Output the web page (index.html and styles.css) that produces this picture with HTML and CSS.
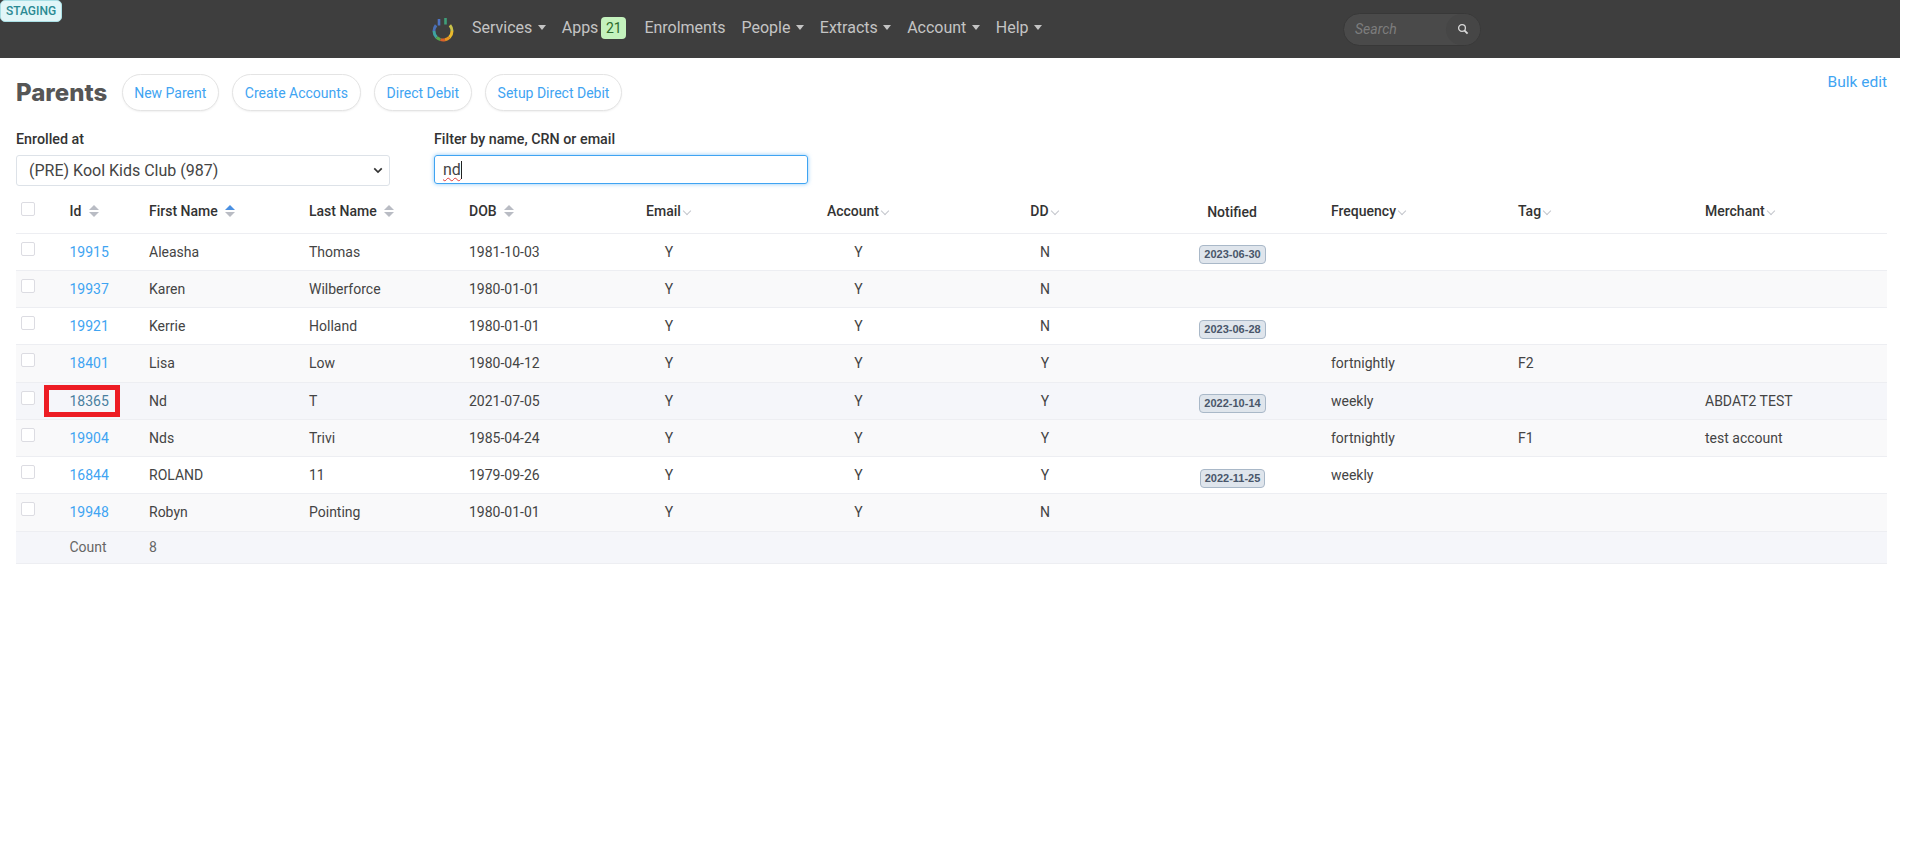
FILE: index.html
```html
<!DOCTYPE html>
<html lang="en">
<head>
<meta charset="utf-8">
<title>Parents</title>
<link rel="stylesheet" href="styles.css">
</head>
<body>
<span class="staging">STAGING</span>
<header class="topbar">
  <svg class="logo" viewBox="0 0 22 25" width="22" height="25" fill="none" stroke-width="3">
    <path d="M4.1 8.2 A9 9 0 0 0 2 14" stroke="#4a6fb5"/>
    <path d="M2 14 A9 9 0 0 0 4.6 20.4" stroke="#3fa3a0"/>
    <path d="M4.6 20.4 A9 9 0 0 0 8.5 22.6" stroke="#5aa84f"/>
    <path d="M8.5 22.6 A9 9 0 0 0 13 22.8" stroke="#d9622b"/>
    <path d="M13 22.8 A9 9 0 0 0 17.4 20.4" stroke="#e8951f"/>
    <path d="M17.4 20.4 A9 9 0 0 0 20 14" stroke="#e9b92c"/>
    <path d="M20 14 A9 9 0 0 0 17.9 8.2" stroke="#c9c24a"/>
    <path d="M7 2 V8.5" stroke="#4f74c4" stroke-width="2.6"/>
    <path d="M13.5 1 V7.5" stroke="#3f9f7a" stroke-width="2.6"/>
  </svg>
  <nav class="menu">
    <a class="menu-item caret">Services</a>
    <a class="menu-item apps">Apps<span class="count">21</span></a>
    <a class="menu-item">Enrolments</a>
    <a class="menu-item caret">People</a>
    <a class="menu-item caret">Extracts</a>
    <a class="menu-item caret">Account</a>
    <a class="menu-item caret">Help</a>
  </nav>
  <div class="search">
    <span class="search-text">Search</span>
    <span class="search-btn">
      <svg viewBox="0 0 12 12" width="12" height="12" fill="none" stroke="#d8d8d8"><circle cx="5" cy="5" r="3.4" stroke-width="1.3"/><path d="M7.6 7.6 L10.6 10.6" stroke-width="1.8"/></svg>
    </span>
  </div>
</header>
<main class="content">
  <div class="title-row">
    <h1>Parents</h1>
    <a class="pill">New Parent</a>
    <a class="pill">Create Accounts</a>
    <a class="pill">Direct Debit</a>
    <a class="pill">Setup Direct Debit</a>
    <a class="bulk">Bulk edit</a>
  </div>
  <div class="filters">
    <div class="field">
      <label>Enrolled at</label>
      <div class="select">(PRE) Kool Kids Club (987)
        <svg viewBox="0 0 12 8" width="10" height="7" fill="none" stroke="#333" stroke-width="2"><path d="M1.5 1.5 L6 6 L10.5 1.5"/></svg>
      </div>
    </div>
    <div class="field">
      <label>Filter by name, CRN or email</label>
      <div class="input"><span class="typed">nd</span><span class="cursor"></span></div>
    </div>
  </div>
  <table>
    <colgroup>
      <col class="c-check"><col class="c-id"><col class="c-name"><col class="c-name"><col class="c-dob">
      <col class="c-192"><col class="c-187"><col class="c-186"><col class="c-183"><col class="c-187"><col class="c-187"><col class="c-192">
    </colgroup>
    <thead>
      <tr>
        <th><span class="box"></span></th>
        <th>Id<i class="sort"></i></th>
        <th>First Name<i class="sort asc"></i></th>
        <th>Last Name<i class="sort"></i></th>
        <th>DOB<i class="sort"></i></th>
        <th class="mid">Email<i class="chev"></i></th>
        <th class="mid">Account<i class="chev"></i></th>
        <th class="mid">DD<i class="chev"></i></th>
        <th class="mid">Notified</th>
        <th>Frequency<i class="chev"></i></th>
        <th>Tag<i class="chev"></i></th>
        <th>Merchant<i class="chev"></i></th>
      </tr>
    </thead>
    <tbody>
      <tr><td><span class="box"></span></td><td><a class="link">19915</a></td><td>Aleasha</td><td>Thomas</td><td>1981-10-03</td><td class="mid">Y</td><td class="mid">Y</td><td class="mid">N</td><td class="mid"><span class="date">2023-06-30</span></td><td></td><td></td><td></td></tr>
      <tr class="alt"><td><span class="box"></span></td><td><a class="link">19937</a></td><td>Karen</td><td>Wilberforce</td><td>1980-01-01</td><td class="mid">Y</td><td class="mid">Y</td><td class="mid">N</td><td class="mid"></td><td></td><td></td><td></td></tr>
      <tr><td><span class="box"></span></td><td><a class="link">19921</a></td><td>Kerrie</td><td>Holland</td><td>1980-01-01</td><td class="mid">Y</td><td class="mid">Y</td><td class="mid">N</td><td class="mid"><span class="date">2023-06-28</span></td><td></td><td></td><td></td></tr>
      <tr class="alt"><td><span class="box"></span></td><td><a class="link">18401</a></td><td>Lisa</td><td>Low</td><td>1980-04-12</td><td class="mid">Y</td><td class="mid">Y</td><td class="mid">Y</td><td class="mid"></td><td>fortnightly</td><td>F2</td><td></td></tr>
      <tr class="hover"><td><span class="box"></span></td><td class="marked"><a class="link dim">18365</a><span class="redbox"></span></td><td>Nd</td><td>T</td><td>2021-07-05</td><td class="mid">Y</td><td class="mid">Y</td><td class="mid">Y</td><td class="mid"><span class="date">2022-10-14</span></td><td>weekly</td><td></td><td>ABDAT2 TEST</td></tr>
      <tr class="alt"><td><span class="box"></span></td><td><a class="link">19904</a></td><td>Nds</td><td>Trivi</td><td>1985-04-24</td><td class="mid">Y</td><td class="mid">Y</td><td class="mid">Y</td><td class="mid"></td><td>fortnightly</td><td>F1</td><td>test account</td></tr>
      <tr><td><span class="box"></span></td><td><a class="link">16844</a></td><td>ROLAND</td><td>11</td><td>1979-09-26</td><td class="mid">Y</td><td class="mid">Y</td><td class="mid">Y</td><td class="mid"><span class="date">2022-11-25</span></td><td>weekly</td><td></td><td></td></tr>
      <tr class="alt"><td><span class="box"></span></td><td><a class="link">19948</a></td><td>Robyn</td><td>Pointing</td><td>1980-01-01</td><td class="mid">Y</td><td class="mid">Y</td><td class="mid">N</td><td class="mid"></td><td></td><td></td><td></td></tr>
    </tbody>
    <tfoot>
      <tr><td></td><td>Count</td><td>8</td><td></td><td></td><td></td><td></td><td></td><td></td><td></td><td></td><td></td></tr>
    </tfoot>
  </table>
</main>
</body>
</html>
```
FILE: styles.css
```css
* { box-sizing: border-box; }
html, body { margin: 0; background: #fff; overflow: hidden; }
body { width: 1900px; height: 856px; font-family: Roboto, "Liberation Sans", sans-serif; font-size: 14px; color: #444; position: relative; }
.staging { position: absolute; left: 0; top: 0; width: 62px; height: 22px; background: #e1f6f8; border: 1px solid #a9dfe5; border-radius: 5px; color: #2b8a93; font-size: 12px; font-weight: 500; line-height: 20px; text-align: center; z-index: 2; }
.topbar { height: 58px; background: #3e3e3e; display: flex; align-items: center; padding-left: 432px; }
.logo { flex: none; margin-right: 18px; }
.menu { display: flex; gap: 16px; font-size: 16px; color: #c4c4c4; width: 871px; margin-bottom: 3px; }
.menu-item { display: inline-flex; align-items: center; white-space: nowrap; }
.caret::after { content: ""; margin-left: 5.4px; border: 4px solid transparent; border-top: 5px solid #c4c4c4; border-bottom: 0; }
.apps { gap: 3px; margin-right: 2px; }
.count { display: inline-block; width: 25px; height: 22px; background: #c4f2bd; border-radius: 4px; color: #2d6b2d; font-size: 14px; line-height: 22px; text-align: center; }
.search { width: 138px; height: 33px; border-radius: 17px; background: #4a4a4a; border: 1px solid #383838; display: flex; align-items: center; justify-content: space-between; padding-left: 11px; }
.search-text { color: #7d7d7d; font-style: italic; font-size: 14px; }
.search-btn { width: 34px; height: 31px; border-radius: 16px; background: #464646; display: flex; align-items: center; justify-content: center; }
.content { padding: 16px 13px 0 16px; }
.title-row { display: flex; align-items: center; height: 37px; gap: 13.5px; position: relative; }
h1 { margin: 0 1px 0 0; font-family: Inter, "Liberation Sans", sans-serif; font-size: 24px; font-weight: 800; color: #565656; }
.pill { height: 37px; padding: 0 11.5px; border: 1px solid #e4e4e4; border-radius: 19px; background: #fff; color: #3fa4f2; line-height: 37px; box-shadow: 0 1px 2px rgba(0,0,0,.06); white-space: nowrap; }
.bulk { position: absolute; right: 0; top: -2px; font-size: 15.5px; color: #3fa4f2; line-height: 20px; }
.filters { display: flex; gap: 44px; margin-top: 18px; }
.field { width: 374px; }
.field label { display: block; font-size: 14.3px; font-weight: 500; color: #333; line-height: 20px; margin-bottom: 6px; }
.select { height: 31px; border: 1px solid #dde2e8; border-radius: 3px; padding: 0 6px 0 12px; font-size: 16px; color: #444; line-height: 29px; display: flex; justify-content: space-between; align-items: center; }
.input { height: 29px; border: 1px solid #3fa4f2; border-radius: 3px; box-shadow: 0 0 4px rgba(63,164,242,.6); padding-left: 8px; font-size: 16px; color: #444; line-height: 27px; display: flex; align-items: center; }
.typed { text-decoration: underline wavy #e23b3b 1px; text-underline-offset: 2px; }
.cursor { width: 1px; height: 18px; background: #222; }
table { width: 100%; border-collapse: collapse; table-layout: fixed; }
.c-check { width: 43.5px; }
.c-id { width: 79.5px; }
.c-name { width: 160px; }
.c-dob { width: 114px; }
.c-192 { width: 192px; }
.c-187 { width: 187px; }
.c-186 { width: 186px; }
.c-183 { width: 183px; }
th, td { padding: 0 10px; text-align: left; vertical-align: middle; white-space: nowrap; border-bottom: 1.5px solid #edeef2; }
th:nth-child(9), td:nth-child(9) { padding-left: 15px; }
th:nth-child(9) { padding-top: 5px; }
thead tr { height: 47px; }
th { font-weight: 500; color: #333; font-size: 14px; padding-top: 3px; }
tbody tr { height: 37.25px; }
tfoot tr { height: 32px; background: #f5f6fa; }
tfoot td { color: #666; }
.alt { background: #f9f9fa; }
.hover { background: #f5f6fa; }
.mid { text-align: center; }
.link { color: #3fa4f2; }
.link.dim { color: #4a7f9f; }
.marked { position: relative; }
.redbox { position: absolute; left: -15.5px; top: 2px; width: 76px; height: 32px; border: 5px solid #ed1c24; }
.box { display: block; width: 14px; height: 14px; margin-left: -5px; margin-top: -6px; border: 1px solid #dcdce2; border-radius: 2px; background: #fff; }
th .box { margin-top: -4px; }
.sort { display: inline-block; width: 10px; height: 12px; margin-left: 7.5px; vertical-align: -1px; }
.sort::before, .sort::after { content: ""; display: block; width: 0; height: 0; border-left: 5px solid transparent; border-right: 5px solid transparent; }
.sort::before { border-bottom: 5px solid #b9bcc4; margin-bottom: 2px; }
.sort::after { border-top: 5px solid #b9bcc4; }
.sort.asc::before { border-bottom-color: #4a90e2; }
.chev { display: inline-block; width: 6px; height: 6px; margin: 0 2px 0 3px; vertical-align: 2px; border-right: 1px solid #c4c6cc; border-bottom: 1px solid #c4c6cc; transform: rotate(45deg); }
.date { display: inline-block; height: 19px; margin: 6px 0 0 1px; padding: 0 4px; background: #dfe5ec; border: 1px solid #a9b8c8; border-radius: 4px; color: #49566a; font-family: "Liberation Sans", sans-serif; font-size: 11px; font-weight: 700; line-height: 16px; vertical-align: middle; }
```
